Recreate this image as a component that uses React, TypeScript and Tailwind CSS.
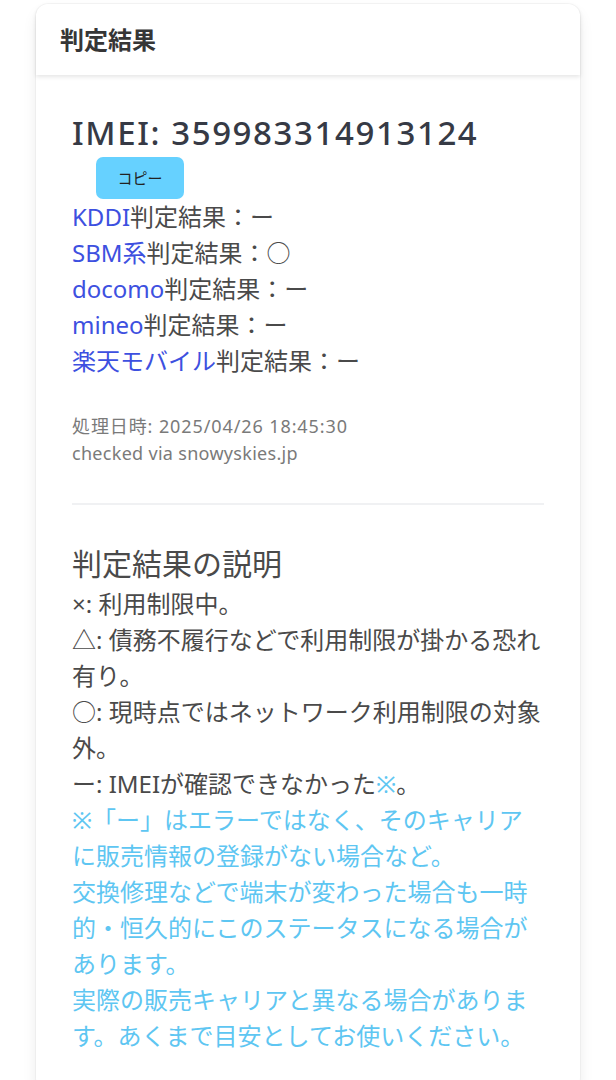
const carriers = [
  { name: "KDDI", result: "ー" },
  { name: "SBM系", result: "○" },
  { name: "docomo", result: "ー" },
  { name: "mineo", result: "ー" },
  { name: "楽天モバイル", result: "ー" },
];

export default function App() {
  return (
    <div className="min-h-screen bg-white px-[36px] pt-[4px] font-['Noto_Sans','Noto_Sans_CJK_JP',sans-serif] text-[#4a4a4a]">
      <div className="rounded-[12px] bg-white shadow-[0_8px_16px_-2px_rgba(10,10,10,0.1),0_0_0_1px_rgba(10,10,10,0.03)]">
        <header className="flex h-[71px] items-center rounded-t-[12px] px-[24px] shadow-[0_2px_4px_rgba(10,10,10,0.1)]">
          <p className="text-[24px] font-bold leading-[36px] text-[#363636]">判定結果</p>
        </header>

        <div className="p-[36px]">
          <h4 className="mt-[2px] text-[33px] font-medium leading-[40px] tracking-[1.6px] text-[#363a45]">
            IMEI: 359983314913124
          </h4>
          <button
            type="button"
            className="ml-[24px] mt-[4px] flex h-[42px] w-[88px] items-center justify-center rounded-[7px] bg-[#66d1ff] text-[15px] text-[#222]"
          >
            コピー
          </button>

          <div className="text-[24px] leading-[36px]">
            {carriers.map((c) => (
              <div key={c.name}>
                <a href="#" className="text-[#3d50e0]">
                  {c.name}
                </a>
                判定結果：{c.result}
              </div>
            ))}
          </div>

          <div className="mt-[34px] text-[18px] leading-[27px] text-[#7a7a7a]">
            <p className="tracking-[0.9px]">処理日時: 2025/04/26 18:45:30</p>
            <p className="tracking-[0.3px]">checked via snowyskies.jp</p>
          </div>

          <hr className="my-[36px] h-[2px] border-0 bg-[#f0f1f3]" />

          <h5 className="text-[30px] leading-[45px]">判定結果の説明</h5>
          <div className="text-[24px] leading-[36px]">
            <p>×: 利用制限中。</p>
            <p>△: 債務不履行などで利用制限が掛かる恐れ有り。</p>
            <p>○: 現時点ではネットワーク利用制限の対象外。</p>
            <p>
              ー: IMEIが確認できなかった<span className="text-[#5ec6f2]">※</span>。
            </p>
            <p className="text-[#5ec6f2]">
              <span className="whitespace-nowrap">※「ー」はエラーではなく、そのキャリア</span>
              <br />
              に販売情報の登録がない場合など。
              <br />
              交換修理などで端末が変わった場合も一時的・恒久的にこのステータスになる場合があります。
              <br />
              実際の販売キャリアと異なる場合があります。あくまで目安としてお使いください。
            </p>
          </div>
        </div>
      </div>
    </div>
  );
}
